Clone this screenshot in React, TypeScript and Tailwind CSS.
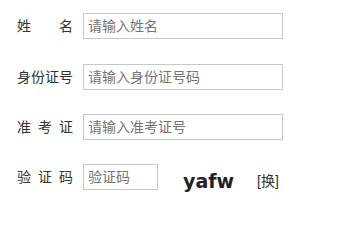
import React from "react";

const font = { fontFamily: '"Liberation Sans", "Noto Sans CJK SC", sans-serif' };

function Label({ chars }: { chars: string[] }) {
  return (
    <div className="ml-[17px] mr-[10px] flex w-[56px] shrink-0 justify-between text-[14px] leading-[20px] text-[#333]">
      {chars.map((c, i) => (
        <span key={i}>{c}</span>
      ))}
    </div>
  );
}

function Field({ ph, w }: { ph: string; w: string }) {
  return (
    <input
      readOnly
      placeholder={ph}
      className={`${w} h-[26px] border border-[#c8c8c8] bg-white px-[4px] text-[14px] text-[#333] outline-none placeholder:text-[#757575]`}
      style={font}
    />
  );
}

export default function App() {
  return (
    <div className="h-[202px] w-[341px] bg-white" style={font}>
      <div className="flex flex-col pt-[13px]">
        <div className="flex items-center">
          <Label chars={["姓", "名"]} />
          <Field ph="请输入姓名" w="w-[200px]" />
        </div>
        <div className="mt-[25px] flex items-center">
          <Label chars={["身", "份", "证", "号"]} />
          <Field ph="请输入身份证号码" w="w-[200px]" />
        </div>
        <div className="mt-[24px] flex items-center">
          <Label chars={["准", "考", "证"]} />
          <Field ph="请输入准考证号" w="w-[200px]" />
        </div>
        <div className="mt-[23px] flex items-center">
          <Label chars={["验", "证", "码"]} />
          <Field ph="验证码" w="w-[75px]" />
          <span
            className="ml-[25px] mt-[8px] text-[19px] font-bold leading-[20px] text-[#222]"
            style={{ fontFamily: '"DejaVu Sans", sans-serif' }}
          >
            yafw
          </span>
          <span className="ml-[23px] mt-[8px] text-[14px] leading-[20px] text-[#333]">[换]</span>
        </div>
      </div>
    </div>
  );
}
